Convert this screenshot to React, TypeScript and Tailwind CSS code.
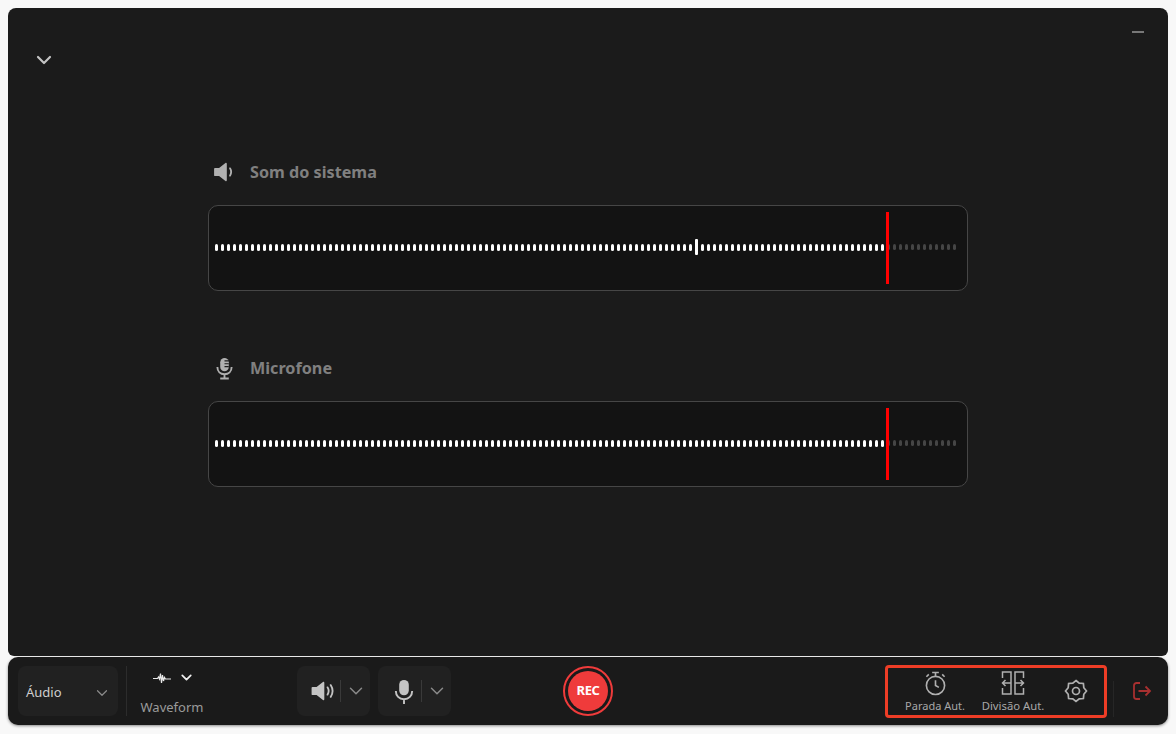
import { ChevronDown } from "lucide-react";

const FONT = "font-['Noto_Sans','Open_Sans',sans-serif]";

// Barra de nivel: 124 tracos, os ultimos apagados depois da linha vermelha.
function Medidor({ marca }: { marca?: number }) {
  return (
    <div className="relative flex h-[86px] w-[760px] items-center gap-[3px] rounded-[10px] border border-[#464646] bg-[#131313] pb-[2px] pl-[6px]">
      {Array.from({ length: 124 }, (_, i) => (
        <span
          key={i}
          className={
            i === marca
              ? "h-[16px] w-[3px] shrink-0 rounded-[1px] bg-white"
              : i > 111
                ? "h-[6px] w-[3px] shrink-0 rounded-full bg-[#454545]"
                : "h-[7px] w-[3px] shrink-0 rounded-full bg-white"
          }
        />
      ))}
      <span className="absolute left-[677px] top-[6px] h-[72px] w-[3px] bg-[#ff0000]" />
    </div>
  );
}

function IconeSom({ className, ondas }: { className: string; ondas: number }) {
  return (
    <svg viewBox="0 0 26 22" className={className} fill="currentColor">
      <path d="M1 7.500c0-.6.4-1 1-1h4.500L13.500 1c.7-.5 1.500-.1 1.500.8v18.400c0 .9-.8 1.300-1.500.8l-7-5.500H2c-.6 0-1-.4-1-1z" />
      <path d="M18.500 7c1.600 2.500 1.600 5.500 0 8" fill="none" stroke="currentColor" strokeWidth="2" strokeLinecap="round" />
      {ondas > 1 && (
        <path d="M22 4.500c2.600 4 2.600 9 0 13" fill="none" stroke="currentColor" strokeWidth="2" strokeLinecap="round" />
      )}
    </svg>
  );
}

function Titulo({ icone, texto, recuo }: { icone: React.ReactNode; texto: string; recuo: string }) {
  return (
    <div className="flex h-[24px] items-center">
      <div className={`flex w-[42px] justify-start text-[#b0b0b0] ${recuo}`}>{icone}</div>
      <span className="text-[16.2px] font-bold text-[#808080]">{texto}</span>
    </div>
  );
}

function BotaoFonte({ icone }: { icone: React.ReactNode }) {
  return (
    <div className="flex h-[50px] w-[73px] items-center rounded-[8px] bg-[#212121] pl-[8px]">
      <div className="flex w-[35px] justify-center text-[#c4c4c4]">{icone}</div>
      <span className="h-[22px] w-px bg-[#3a3a3a]" />
      <ChevronDown className="ml-[4px] h-[22px] w-[22px] text-[#8a8a8a]" strokeWidth={1.6} />
    </div>
  );
}

export default function App() {
  return (
    <div className={`${FONT} flex h-[734px] w-[1176px] flex-col bg-[#f8f8f8] px-[8px] pt-[8px]`}>
      <main className="relative flex h-[648px] flex-col items-center rounded-t-[8px] rounded-b-[6px] bg-[#1b1b1b] pt-[152px]">
        <ChevronDown className="absolute left-[24px] top-[40px] h-[24px] w-[24px] text-[#c4c4c4]" strokeWidth={2.2} />
        <span className="absolute right-[24px] top-[23px] h-[2px] w-[12px] bg-[#777777]" />

        <div className="flex w-[760px] flex-col">
          <Titulo recuo="pl-[5px]" icone={<IconeSom className="h-[20px] w-[24px]" ondas={1} />} texto="Som do sistema" />
          <div className="mt-[21px]">
            <Medidor marca={80} />
          </div>
          <div className="mt-[65px]">
            <Titulo
              recuo="pl-[7px]"
              icone={
                <svg viewBox="0 0 20 24" className="h-[23px] w-[19px]" fill="none" stroke="currentColor">
                  <rect x="5.500" y="1" width="9" height="14" rx="4.500" fill="currentColor" stroke="none" />
                  <path d="M10 4h4.500M10 7h4.500M10 10h4.500" stroke="#1b1b1b" strokeWidth="1.200" />
                  <path d="M2.500 10.500c0 4.500 3.200 7.500 7.500 7.500s7.500-3 7.500-7.500M10 18v4M5.500 22.500h9" strokeWidth="2" />
                </svg>
              }
              texto="Microfone"
            />
          </div>
          <div className="mt-[21px]">
            <Medidor />
          </div>
        </div>
      </main>

      <footer className="mt-[1px] flex h-[68px] items-center rounded-[10px] bg-[#1a1a1a] pl-[10px] shadow-[0_1px_3px_rgba(0,0,0,0.45)]">
        <div className="flex h-[50px] w-[100px] items-center justify-between rounded-[8px] bg-[#212121] pl-[8px] pr-[7px] pt-[3px]">
          <span className="text-[13px] text-[#cfcfcf]">Áudio</span>
          <ChevronDown className="h-[18px] w-[18px] text-[#8a8a8a]" strokeWidth={1.6} />
        </div>
        <span className="ml-[8px] h-[50px] w-px bg-[#2c2c2c]" />

        <div className="flex w-[90px] flex-col items-center pt-[1px]">
          <div className="flex h-[20px] items-center gap-[7px] pl-[3px]">
            <svg viewBox="0 0 18 12" className="h-[12px] w-[18px]" fill="none" stroke="#e8e8e8" strokeWidth="1.200">
              <path d="M0 6.500h4.500l1-1.500 1 2 1-5.500 1 9.500 1-8 1 6 1-3.500 1 1.500H18" />
            </svg>
            <ChevronDown className="h-[17px] w-[17px] text-[#f0f0f0]" strokeWidth={2.4} />
          </div>
          <span className="mt-[10px] text-[13px] leading-[18px] text-[#9a9a9a]">Waveform</span>
        </div>

        <div className="ml-[80px] flex gap-[8px]">
          <BotaoFonte icone={<IconeSom className="h-[20px] w-[25px]" ondas={2} />} />
          <BotaoFonte
            icone={
              <svg viewBox="0 0 20 26" className="h-[25px] w-[20px]" fill="none" stroke="currentColor">
                <rect x="5" y="1" width="10" height="16" rx="5" fill="currentColor" stroke="none" />
                <path d="M1.500 12.500c0 5 3.500 8.500 8.500 8.500s8.500-3.500 8.500-8.500M10 21v5" strokeWidth="2" />
              </svg>
            }
          />
        </div>

        <div className="ml-[112px] flex h-[50px] w-[50px] items-center justify-center rounded-full border-2 border-[#ef3b3b]">
          <div className="flex h-[40px] w-[40px] items-center justify-center rounded-full bg-[#ef3b3b] text-[13px] font-bold tracking-[-0.4px] text-white">
            REC
          </div>
        </div>

        <div className="ml-[272px] flex h-[53px] w-[222px] items-center rounded-[4px] border-[3px] border-[#ee3d26] pl-[16px]">
          <div className="flex w-[62px] flex-col items-center pt-[2px]">
            <svg viewBox="0 0 24 26" className="h-[25px] w-[23px]" fill="none" stroke="#b0b0b0" strokeWidth="1.700">
              <circle cx="12" cy="15" r="9.500" />
              <path d="M12 9.500V15l3.500 2M8.500 1.500h7M12 1.500v4M2.500 6l2.500-2.500M21.500 6 19 3.500" />
            </svg>
            <span className="mt-[2px] whitespace-nowrap text-[11px] leading-[16px] text-[#a8a8a8]">Parada Aut.</span>
          </div>
          <div className="ml-[15px] flex w-[64px] flex-col items-center pt-[2px]">
            <svg viewBox="0 0 24 24" className="h-[24px] w-[24px]" fill="none" stroke="#b0b0b0" strokeWidth="1.500">
              <path d="M1.500 7V1h8.500v22H1.500v-6M22.500 7V1H14v22h8.500v-6M9.500 12H1M4.500 9l-3 3 3 3M14.500 12H23M19.500 9l3 3-3 3" />
            </svg>
            <span className="mt-[3px] whitespace-nowrap text-[11.300px] leading-[16px] text-[#a8a8a8]">Divisão Aut.</span>
          </div>
          <svg viewBox="0 0 24 24" className="ml-[19px] h-[24px] w-[24px]" fill="none" stroke="#b0b0b0" strokeWidth="1.700">
            <path d="m12 1.500 3.200 2.700 4.200.3.400 4.200L22.500 12l-2.700 3.300-.4 4.200-4.200.3L12 22.500l-3.200-2.700-4.200-.3-.4-4.200L1.500 12l2.700-3.300.4-4.200 4.200-.3z" />
            <circle cx="12" cy="12" r="3.500" />
          </svg>
        </div>

        <span className="mb-[8px] ml-[6px] h-[36px] w-px self-end bg-[#262626]" />
        <svg viewBox="0 0 20 20" className="ml-[18px] h-[20px] w-[20px]" fill="none" stroke="#a83030" strokeWidth="1.800">
          <path d="M8 2H4.500C3 2 2 3 2 4.500v11C2 17 3 18 4.500 18H8M6.500 10H18M13.500 5.500 18 10l-4.500 4.500" />
        </svg>
      </footer>
    </div>
  );
}
